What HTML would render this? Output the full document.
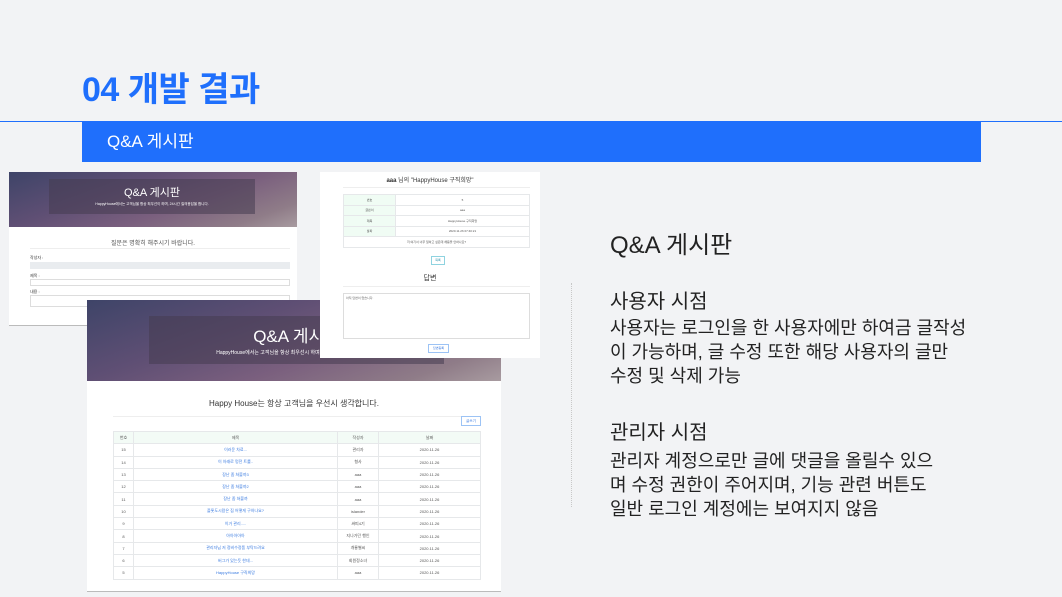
<!DOCTYPE html>
<html><head><meta charset="utf-8"><style>
*{margin:0;padding:0;box-sizing:border-box}
body{width:1062px;height:597px;background:#f2f3f5;position:relative;overflow:hidden;font-family:"Liberation Sans","Noto Sans CJK KR",sans-serif}
.a{position:absolute}
.ban{background:linear-gradient(160deg,#3e4468 0%,#5f4f74 35%,#7a5f7e 60%,#8f7c88 85%,#a89ba0 100%)}
.box{background:rgba(70,60,80,.55);color:#fff;text-align:center}
table{border-collapse:collapse;width:100%}
td{border:1px solid #e6e8ea;text-align:center;color:#555;font-size:4px;height:12.3px}
.r{color:#222;font-size:18px;line-height:24px}
</style></head><body>
<div class="a" style="left:82px;top:62px;font-size:34px;font-weight:bold;color:#1f6ffc;letter-spacing:-0.5px">04 개발 결과</div>
<div class="a" style="left:0;top:121px;width:1062px;height:1px;background:#1f6ffc"></div>
<div class="a" style="left:82px;top:121px;width:899px;height:41px;background:#1f6ffc;color:#fff;font-size:17px;line-height:41px;padding-left:25px">Q&amp;A 게시판</div>

<!-- shot 1 -->
<div class="a" style="left:9px;top:172px;width:288px;height:154px;background:#fff;border-bottom:1px solid #bbb">
 <div class="ban" style="height:55px;position:relative">
  <div class="a box" style="left:40px;top:7px;width:206px;height:35px"><div style="font-size:11px;margin-top:5px">Q&amp;A 게시판</div><div style="font-size:3.5px;margin-top:2px">HappyHouse에서는 고객님을 항상 최우선이 하며, 24시간 질의응답을 합니다.</div></div>
 </div>
 <div style="text-align:center;font-size:6px;color:#555;margin-top:11px">질문은 명확히 해주시기 바랍니다.</div>
 <div class="a" style="left:21px;top:76px;width:260px;height:1px;background:#eee"></div>
 <div class="a" style="left:21px;top:83px;font-size:4px;color:#333">작성자 :</div>
 <div class="a" style="left:21px;top:90px;width:260px;height:7px;background:#e9ecef"></div>
 <div class="a" style="left:21px;top:101px;font-size:4px;color:#333">제목 :</div>
 <div class="a" style="left:21px;top:107px;width:260px;height:7px;border:1px solid #ddd"></div>
 <div class="a" style="left:21px;top:117px;font-size:4px;color:#333">내용 :</div>
 <div class="a" style="left:21px;top:123px;width:260px;height:12px;border:1px solid #ddd"></div>
</div>

<!-- shot 3 -->
<div class="a" style="left:87px;top:300px;width:414px;height:292px;background:#fff;border-bottom:1px solid #bbb">
 <div class="ban" style="height:81px;position:relative">
  <div class="a box" style="left:62px;top:16px;width:295px;height:48px"><div style="font-size:17px;margin-top:6px">Q&amp;A 게시판</div><div style="font-size:5px;margin-top:2px">HappyHouse에서는 고객님을 항상 최우선시 하며 24시간 질의응답을 합니다.</div></div>
 </div>
 <div style="text-align:center;font-size:8px;color:#333;margin-top:17px">Happy House는 항상 고객님을 우선시 생각합니다.</div>
 <div class="a" style="left:26px;top:116px;width:368px;height:1px;background:#eee"></div>
 <div class="a" style="left:374px;top:116px;width:20px;height:10px;border:1px solid #9cc3f5;font-size:3.5px;color:#3a7be0;text-align:center;line-height:8px">글쓰기</div>
 <div class="a" style="left:26px;top:131px;width:368px">
 <table>
 <tr style="background:#f3fbf6"><td style="width:20px">번호</td><td style="width:204px">제목</td><td style="width:41px">작성자</td><td>날짜</td></tr>
 <tr><td>15</td><td style="color:#3a7be0">이러운 차료...</td><td>관리자</td><td>2020.11.26</td></tr>
 <tr><td>14</td><td style="color:#3a7be0">이 아래로 멍전 트롤..</td><td>형사</td><td>2020.11.26</td></tr>
 <tr><td>13</td><td style="color:#3a7be0">장난 좀 쳐볼까3</td><td>aaa</td><td>2020.11.26</td></tr>
 <tr><td>12</td><td style="color:#3a7be0">장난 좀 쳐볼까2</td><td>aaa</td><td>2020.11.26</td></tr>
 <tr><td>11</td><td style="color:#3a7be0">장난 좀 쳐볼까</td><td>aaa</td><td>2020.11.26</td></tr>
 <tr><td>10</td><td style="color:#3a7be0">플롯도시람은 집 어떻게 구하나요?</td><td>islander</td><td>2020.11.26</td></tr>
 <tr><td>9</td><td style="color:#3a7be0">이거 관리.....</td><td>싸피4기</td><td>2020.11.26</td></tr>
 <tr><td>8</td><td style="color:#3a7be0">아아아아아</td><td>지나가던 행인</td><td>2020.11.26</td></tr>
 <tr><td>7</td><td style="color:#3a7be0">관리자님 저 정비수정품 부탁드려요</td><td>개룡별씨</td><td>2020.11.26</td></tr>
 <tr><td>6</td><td style="color:#3a7be0">버그가 있는듯 한데...</td><td>회원정소녀</td><td>2020.11.26</td></tr>
 <tr><td>5</td><td style="color:#3a7be0">HappyHouse 구직희망</td><td>aaa</td><td>2020.11.26</td></tr>
 </table></div>
</div>

<!-- shot 2 -->
<div class="a" style="left:320px;top:172px;width:220px;height:186px;background:#fff">
 <div style="text-align:center;font-size:6px;color:#333;margin-top:3px"><b>aaa</b> 님의 "HappyHouse 구직희망"</div>
 <div class="a" style="left:23px;top:15px;width:187px;height:1px;background:#eee"></div>
 <div class="a" style="left:23px;top:22px;width:187px">
 <table>
 <tr><td style="width:52px;background:#f0fcf4;height:10.5px;font-size:3px">번호</td><td style="font-size:3px;height:10.5px">5</td></tr>
 <tr><td style="background:#f0fcf4;height:10.5px;font-size:3px">글쓴이</td><td style="font-size:3px;height:10.5px">aaa</td></tr>
 <tr><td style="background:#f0fcf4;height:10.5px;font-size:3px">제목</td><td style="font-size:3px;height:10.5px">HappyHouse 구직희망</td></tr>
 <tr><td style="background:#f0fcf4;height:10.5px;font-size:3px">날짜</td><td style="font-size:3px;height:10.5px">2020.11.26 07:40:21</td></tr>
 <tr><td colspan="2" style="font-size:3px;height:10.5px">저 여기서 너무 일하고 싶은데 채용을 안하나요?</td></tr>
 </table></div>
 <div class="a" style="left:111px;top:84px;width:14px;height:9px;border:1px solid #8fd3e0;font-size:3px;text-align:center;line-height:7px;color:#3a9ab0">목록</div>
 <div class="a" style="left:0;top:101px;width:220px;text-align:center;font-size:7px;color:#333">답변</div>
 <div class="a" style="left:23px;top:114px;width:187px;height:1px;background:#eee"></div>
 <div class="a" style="left:23px;top:121px;width:187px;height:46px;border:1px solid #ddd;font-size:3px;color:#666;padding:2px">아직 답변이 없습니다.</div>
 <div class="a" style="left:108px;top:172px;width:21px;height:9px;border:1px solid #9cc3f5;font-size:3px;text-align:center;line-height:7px;color:#3a7be0">답변등록</div>
</div>

<div class="a" style="left:571px;top:283px;height:224px;border-left:1px dotted #c8c8c8"></div>
<div class="a" style="left:610px;top:225px;font-size:24px;color:#222">Q&amp;A 게시판</div>
<div class="a r" style="left:610px;top:290px;font-size:20px">사용자 시점</div>
<div class="a r" style="left:610px;top:316px">사용자는 로그인을 한 사용자에만 하여금 글작성<br>이 가능하며, 글 수정 또한 해당 사용자의 글만<br>수정 및 삭제 가능</div>
<div class="a r" style="left:610px;top:421px;font-size:20px">관리자 시점</div>
<div class="a r" style="left:610px;top:449px">관리자 계정으로만 글에 댓글을 올릴수 있으<br>며 수정 권한이 주어지며, 기능 관련 버튼도<br>일반 로그인 계정에는 보여지지 않음</div>
</body></html>
